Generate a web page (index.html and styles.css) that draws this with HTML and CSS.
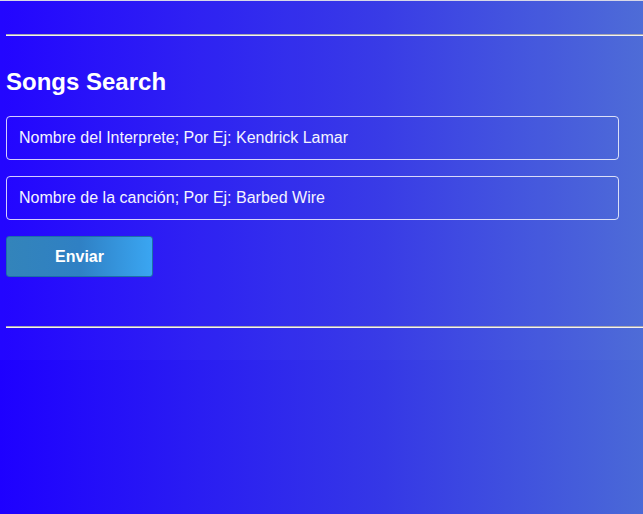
FILE: index.html
```html
<!DOCTYPE html>
<html lang="es">
<head>
<meta charset="utf-8">
<title>Songs Search</title>
<link rel="stylesheet" href="styles.css">
</head>
<body>
<div class="wrap">
  <div class="rule"></div>
  <h2 class="title">Songs Search</h2>
  <form class="form">
    <input class="field" type="text" placeholder="Nombre del Interprete; Por Ej: Kendrick Lamar">
    <input class="field" type="text" placeholder="Nombre de la canción; Por Ej: Barbed Wire">
    <button class="btn" type="button">Enviar</button>
  </form>
  <div class="rule rule-bottom"></div>
</div>
</body>
</html>
```
FILE: styles.css
```css
html, body {
  margin: 0;
  padding: 0;
}
body {
  min-height: 100vh;
  background: linear-gradient(to right, #1e00ff 0%, #3538e6 60%, #4a69d7 100%);
  font-family: "Liberation Sans", Arial, sans-serif;
  color: #fff;
  overflow: hidden;
}
.wrap {
  border-top: 1px solid #d8d8e8;
  background: rgba(255, 255, 255, 0.025);
  padding: 0 0 32px 6px;
  height: 327px;
}
.rule {
  margin-top: 33px;
  border-top: 1px solid #a8a8b0;
  border-bottom: 1px solid #f2f2f2;
}
.rule-bottom {
  margin-top: 49px;
}
.title {
  margin: 32px 0 20px;
  font-size: 24px;
  font-weight: bold;
  line-height: 28px;
}
.form {
  display: flex;
  flex-direction: column;
  align-items: flex-start;
  gap: 16px;
}
.field {
  box-sizing: border-box;
  width: 613px;
  height: 44px;
  margin: 0;
  padding: 0 12px;
  border: 1px solid rgba(255, 255, 255, 0.8);
  border-radius: 4px;
  background: transparent;
  color: #fff;
  font-family: "Liberation Sans", Arial, sans-serif;
  font-size: 16px;
  outline: none;
}
.field::placeholder {
  color: #f4f4ff;
  opacity: 1;
}
.btn {
  box-sizing: border-box;
  width: 147px;
  height: 41px;
  margin: 0;
  border: 1px solid #1d6fa8;
  border-radius: 3px;
  background: linear-gradient(to right, #3384ba 0%, #2f80c4 50%, #3aa6f2 100%);
  color: #fff;
  font-family: "Liberation Sans", Arial, sans-serif;
  font-size: 16px;
  font-weight: bold;
  cursor: pointer;
}
```
